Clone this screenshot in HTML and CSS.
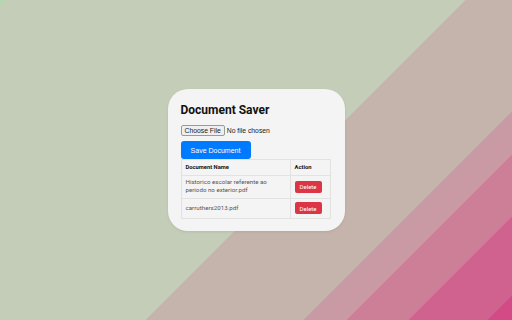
FILE: index.html
```html
<!DOCTYPE html>
<html lang="en">
<head>
    <meta charset="UTF-8">
    <meta name="viewport" content="width=device-width, initial-scale=1.0">
    <title>Document Saver</title>
    <link rel="stylesheet" href="styles.css">
</head>
<body>
    <div class="page">
        <div class="saver">
            <h1>Document Saver</h1>
            <input class="file" type="file">
            <button class="save">Save Document</button>
            <table class="docs">
                <thead>
                    <tr>
                        <th class="name-col">Document Name</th>
                        <th class="action-col">Action</th>
                    </tr>
                </thead>
                <tbody>
                    <tr>
                        <td>Historico escolar referente ao periodo no exterior.pdf</td>
                        <td><button class="delete">Delete</button></td>
                    </tr>
                    <tr>
                        <td>carruthers2013.pdf</td>
                        <td><button class="delete">Delete</button></td>
                    </tr>
                </tbody>
            </table>
        </div>
    </div>
</body>
</html>
```

FILE: styles.css
```css
* {
    margin: 0;
    padding: 0;
    box-sizing: border-box;
}
html, body {
    height: 100%;
}
body {
    font-family: Roboto, "Liberation Sans", sans-serif;
    background: linear-gradient(135deg,
        #b7d5b1 0px, #b7d5b1 4px,
        #c3cdb8 4px, #c3cdb8 329px,
        #c4b4ac 329px, #c4b4ac 441px,
        #c99aa3 441px, #c99aa3 471px,
        #cc7f97 471px, #cc7f97 515px,
        #cf628f 515px, #cf628f 571px,
        #d44a87 571px);
}
.page {
    width: 100vw;
    height: 100vh;
    display: flex;
    justify-content: center;
    align-items: center;
}
.saver {
    width: 177px;
    padding: 14px 14px 12px 13px;
    background-color: #f4f4f4;
    border-radius: 20px;
    box-shadow: 0 1px 3px rgba(0, 0, 0, 0.08);
}
.saver h1 {
    font-size: 12px;
    font-weight: bold;
    line-height: 14px;
    color: #111;
}
.file {
    display: block;
    margin-top: 8px;
    font-family: "Liberation Sans", Arial, sans-serif;
    font-size: 6.8px;
    color: #222;
}
.file::file-selector-button {
    font-family: "Liberation Sans", Arial, sans-serif;
    font-size: 6.8px;
    height: 11px;
    padding: 0 3px;
    margin-right: 2px;
    border: 1px solid #9a9a9a;
    border-radius: 2px;
    background-color: #efefef;
    color: #222;
}
.save {
    display: block;
    margin-top: 5px;
    width: 70px;
    height: 18px;
    border: none;
    border-radius: 3px;
    background-color: #007bff;
    color: #fff;
    font-family: "Liberation Sans", Arial, sans-serif;
    font-size: 7px;
}
.docs {
    width: 150px;
    border-collapse: collapse;
    font-size: 6.2px;
    line-height: 7.5px;
    color: #555;
}
.docs th, .docs td {
    border: 1px solid #e2e2e2;
    padding: 3.5px 4px;
    text-align: left;
    vertical-align: middle;
}
.docs th {
    color: #111;
    font-weight: bold;
    font-size: 5.8px;
}
.name-col {
    width: 109px;
}
.delete {
    display: block;
    width: 27px;
    height: 12px;
    border: none;
    border-radius: 2px;
    background-color: #dc3545;
    color: #fff;
    font-family: Roboto, "Liberation Sans", sans-serif;
    font-size: 6px;
}
```
